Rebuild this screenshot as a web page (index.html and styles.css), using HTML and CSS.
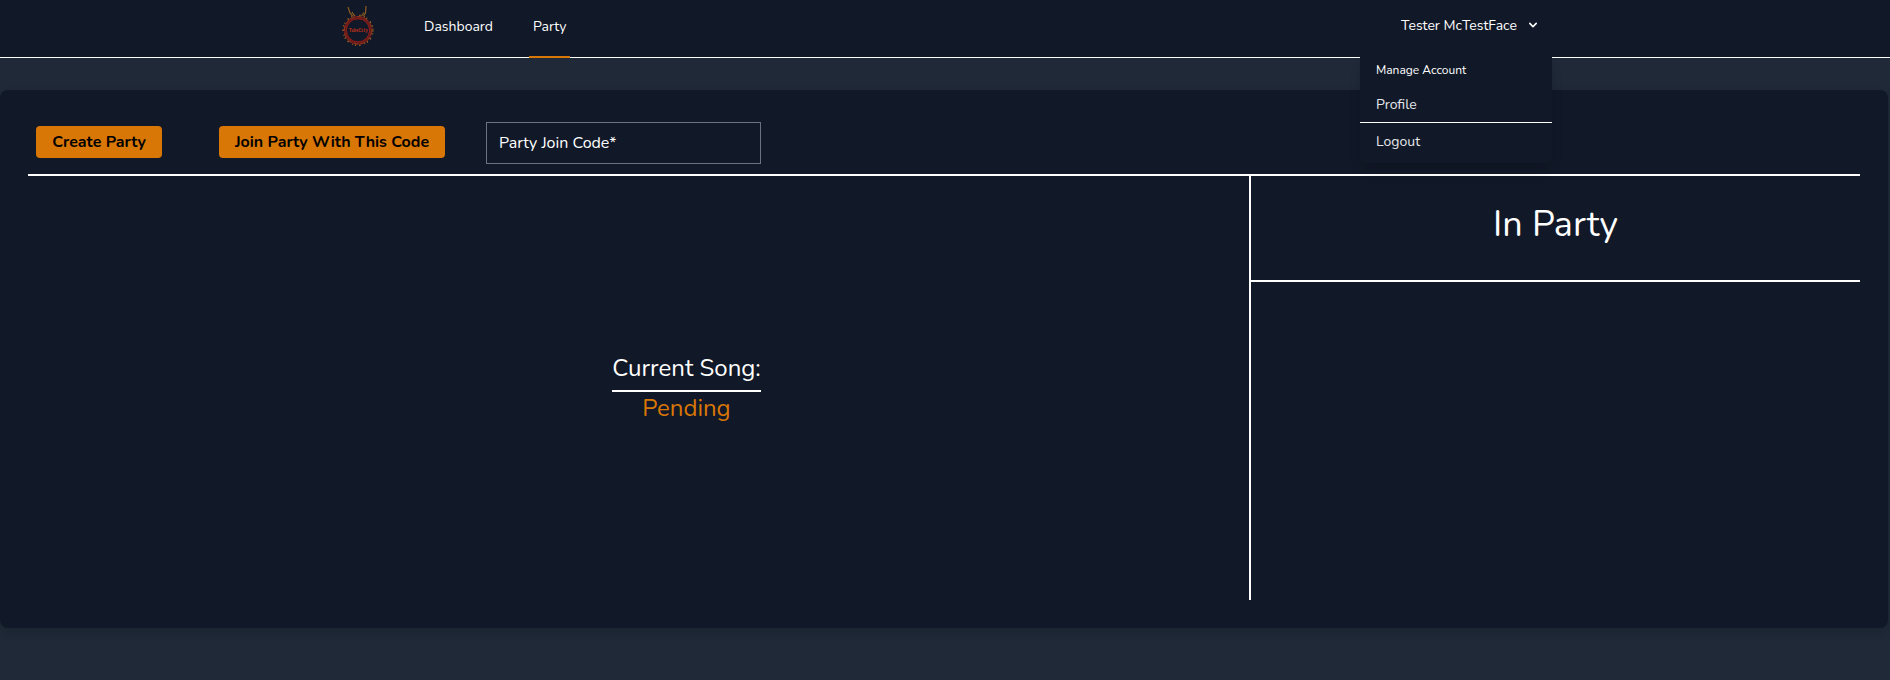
FILE: index.html
```html
<!DOCTYPE html>
<html lang="en">
<head>
<meta charset="utf-8">
<title>Party</title>
<link rel="stylesheet" href="styles.css">
</head>
<body>
<nav class="nav">
  <svg class="logo" viewBox="0 0 36 44" fill="none">
    <path d="M12.500 12 10 9 8 3M14.500 12 12 8M21.500 12 24 8.500M23.500 12 25.500 9 26 2" stroke="#8c5b22" stroke-width="1.2"/>
    <circle cx="18" cy="26.300" r="14.800" stroke="#9a6428" stroke-width="1.800" stroke-dasharray="1.200 2 .8 4 1.500 3"/>
    <circle cx="18" cy="26.300" r="12.700" stroke="#65191a" stroke-width="3.200"/>
    <circle cx="18" cy="26.300" r="13.700" stroke="#99401c" stroke-width=".8" stroke-dasharray="5 2"/>
    <circle cx="18" cy="26.300" r="11.600" stroke="#94201a" stroke-width=".8"/>
    <text x="18.500" y="28.300" class="logo-text" text-anchor="middle" textLength="19" lengthAdjust="spacingAndGlyphs">TubeCity</text>
  </svg>
  <a class="link dash"><span>Dashboard</span></a>
  <a class="link active"><span>Party</span></a>
  <div class="account">
    <button class="user"><span class="user-name">Tester McTestFace</span>
      <svg class="chevron" viewBox="0 0 20 20"><path fill="currentColor" fill-rule="evenodd" d="M5.293 7.293a1 1 0 011.414 0L10 10.586l3.293-3.293a1 1 0 111.414 1.414l-4 4a1 1 0 01-1.414 0l-4-4a1 1 0 010-1.414z"/></svg>
    </button>
    <div class="menu">
      <div class="menu-title"><span>Manage Account</span></div>
      <a class="menu-item profile"><span>Profile</span></a>
      <a class="menu-item logout"><span>Logout</span></a>
    </div>
  </div>
</nav>
<main class="card">
  <div class="toolbar">
    <button class="btn create">Create Party</button>
    <button class="btn join">Join Party With This Code</button>
    <div class="code"><span>Party Join Code*</span></div>
  </div>
  <div class="panels">
    <section class="song">
      <div class="song-title"><span>Current Song:</span></div>
      <div class="pending"><span>Pending</span></div>
    </section>
    <section class="members"><h1><span>In Party</span></h1></section>
  </div>
</main>
</body>
</html>
```
FILE: styles.css
```css
* { box-sizing: border-box; }
body {
  margin: 0;
  height: 680px;
  overflow: hidden;
  background: #1f2937;
  color: #fff;
  font-family: Nunito, Lato, sans-serif;
}
button { border: 0; font-family: inherit; white-space: nowrap; }
.nav {
  height: 58px;
  display: flex;
  padding-left: 340px;
  background: #111827;
  border-bottom: 1px solid #fff;
}
.logo { width: 36px; height: 44px; margin-top: 4px; flex: none; }
.logo-text { font: 700 5.5px "Liberation Mono", monospace; fill: #c4311a; }
.link {
  height: 58px;
  padding-top: 17px;
  font-size: 14px;
  line-height: 20px;
  font-weight: 400;
  white-space: nowrap;
}
.dash { width: 77px; margin-left: 44px; padding-left: 4px; }
.active { width: 41px; margin-left: 32px; padding-left: 4px; border-bottom: 2px solid #d97706; }
.account { position: relative; width: 192px; margin-left: 790px; }
.user {
  display: flex;
  align-items: center;
  height: 20px;
  margin: 15px 0 0 41px;
  padding: 0;
  background: none;
  color: #fff;
  font-size: 14px;
}
.user-name { width: 116px; }
.chevron { width: 16px; height: 16px; margin-left: 8px; }
.menu {
  position: absolute;
  top: 51px;
  left: 0;
  width: 192px;
  height: 112px;
  padding-top: 9px;
  background: #111827;
  border-radius: 6px;
  box-shadow: 0 10px 15px -3px rgba(0,0,0,.1), 0 4px 6px -2px rgba(0,0,0,.05);
}
.menu-title { height: 27px; padding: 2px 16px; font-size: 12px; line-height: 16px; }
.menu-item { display: block; padding: 8px 16px; font-size: 14px; line-height: 20px; color: #e5e7eb; }
.profile { height: 36px; border-bottom: 1px solid #fff; }
.logout { padding-top: 9px; }
.card {
  width: 1888px;
  height: 538px;
  margin-top: 32px;
  padding: 32px 28px 28px;
  background: #111827;
  border-radius: 8px;
  box-shadow: 0 4px 8px rgba(0,0,0,.12);
}
.toolbar {
  height: 54px;
  display: flex;
  align-items: flex-start;
  padding-left: 8px;
  border-bottom: 2px solid #fff;
}
.btn {
  height: 32px;
  margin-top: 4px;
  padding: 0;
  border-radius: 4px;
  background: #d97706;
  color: #000;
  font-size: 16px;
  font-weight: 700;
  line-height: 32px;
}
.create { width: 126px; }
.join { width: 226px; margin-left: 57px; }
.code {
  width: 275px;
  height: 42px;
  margin-left: 41px;
  padding: 8px 12px;
  border: 1px solid #6b7280;
  font-size: 16px;
  line-height: 24px;
}
.panels { display: flex; height: 424px; }
.song {
  width: 1221px;
  padding: 176px 0 0 96px;
  display: flex;
  flex-direction: column;
  align-items: center;
  font-size: 24px;
  line-height: 32px;
}
.song-title { width: 149px; height: 40px; text-align: center; white-space: nowrap; border-bottom: 2px solid #fff; }
.pending { color: #d97706; }
.members { flex: 1; border-left: 2px solid #fff; }
h1 {
  height: 106px;
  margin: 0;
  padding-top: 29px;
  border-bottom: 2px solid #fff;
  font-size: 36px;
  font-weight: 400;
  line-height: 40px;
  text-align: center;
}
```
